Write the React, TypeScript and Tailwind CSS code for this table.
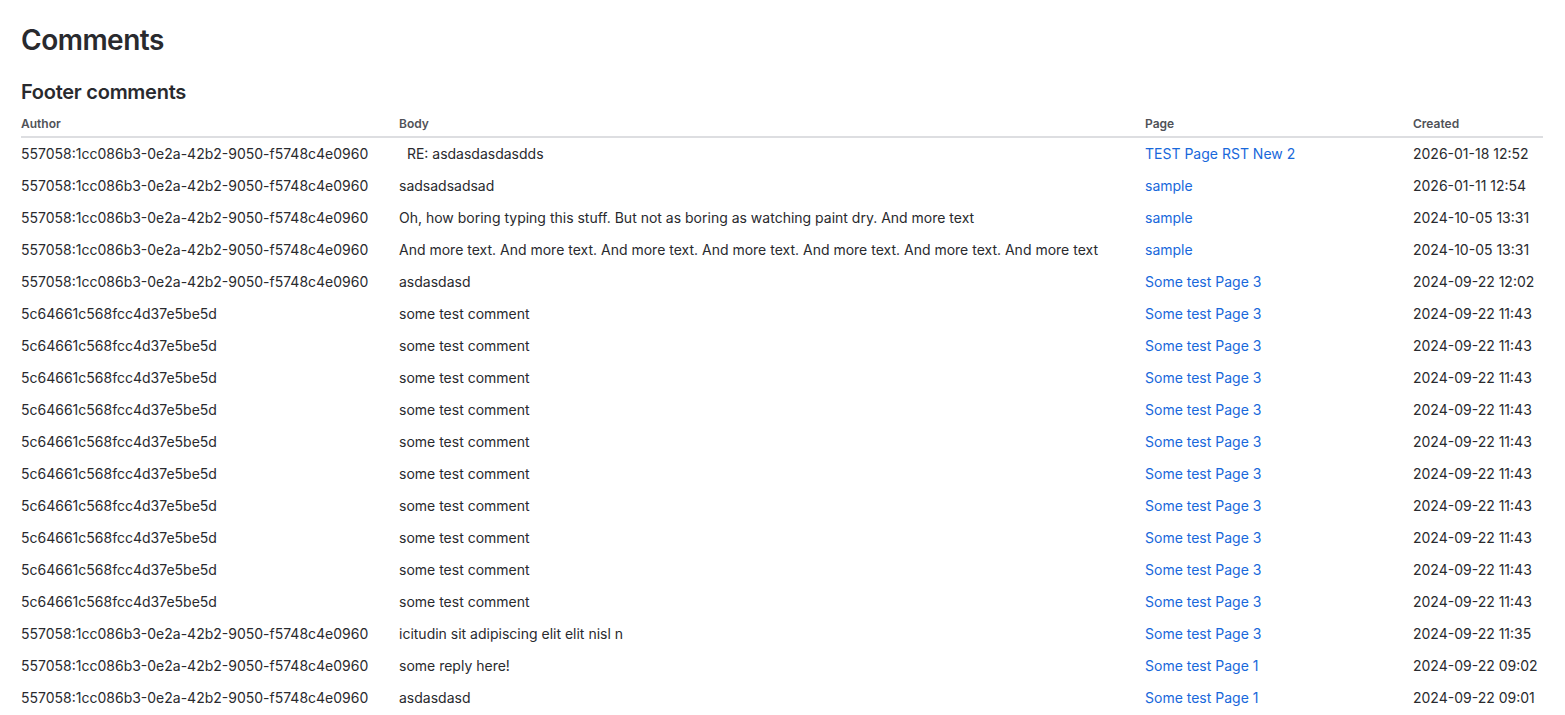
const LONG = "557058:1cc086b3-0e2a-42b2-9050-f5748c4e0960";
const SHORT = "5c64661c568fcc4d37e5be5d";

type Row = { author: string; body: string; page: string; created: string };

const testRows: Row[] = Array.from({ length: 10 }, () => ({
  author: SHORT,
  body: "some test comment",
  page: "Some test Page 3",
  created: "2024-09-22 11:43",
}));

const ROWS: Row[] = [
  { author: LONG, body: "\u00a0\u00a0RE: asdasdasdasdds", page: "TEST Page RST New 2", created: "2026-01-18 12:52" },
  { author: LONG, body: "sadsadsadsad", page: "sample", created: "2026-01-11 12:54" },
  {
    author: LONG,
    body: "Oh, how boring typing this stuff. But not as boring as watching paint dry. And more text",
    page: "sample",
    created: "2024-10-05 13:31",
  },
  {
    author: LONG,
    body: "And more text. And more text. And more text. And more text. And more text. And more text. And more text",
    page: "sample",
    created: "2024-10-05 13:31",
  },
  { author: LONG, body: "asdasdasd", page: "Some test Page 3", created: "2024-09-22 12:02" },
  ...testRows,
  { author: LONG, body: "icitudin sit adipiscing elit elit nisl n", page: "Some test Page 3", created: "2024-09-22 11:35" },
  { author: LONG, body: "some reply here!", page: "Some test Page 1", created: "2024-09-22 09:02" },
  { author: LONG, body: "asdasdasd", page: "Some test Page 1", created: "2024-09-22 09:01" },
];

export default function App() {
  return (
    <div className="min-h-screen bg-white px-[21px] pt-[22px] font-['Inter',sans-serif] text-[#292a2e]">
      <h1 className="text-[28px] font-semibold leading-9 tracking-[-0.018em]">Comments</h1>

      <h2 className="mt-[20px] text-[20px] font-semibold leading-7 tracking-[-0.013em]">Footer comments</h2>

      <table className="mt-[10px] w-[1522px] table-fixed border-collapse text-left">
        <colgroup>
          <col className="w-[378px]" />
          <col className="w-[746px]" />
          <col className="w-[268px]" />
          <col className="w-[130px]" />
        </colgroup>
        <thead>
          <tr className="border-b-2 border-[#dddee1]">
            {["Author", "Body", "Page", "Created"].map((h) => (
              <th key={h} className="pb-[4px] pt-0 text-[12px] font-semibold leading-4 text-[#505258]">
                {h}
              </th>
            ))}
          </tr>
        </thead>
        <tbody className="text-[14px] leading-5">
          {ROWS.map((r, i) => (
            <tr key={i} className="h-8">
              <td className="py-1.5 whitespace-nowrap">{r.author}</td>
              <td className="py-1.5 whitespace-nowrap">{r.body}</td>
              <td className="py-1.5 whitespace-nowrap">
                <a href="#" className="text-[#1868db]">
                  {r.page}
                </a>
              </td>
              <td className="py-1.5 whitespace-nowrap">{r.created}</td>
            </tr>
          ))}
        </tbody>
      </table>
    </div>
  );
}
